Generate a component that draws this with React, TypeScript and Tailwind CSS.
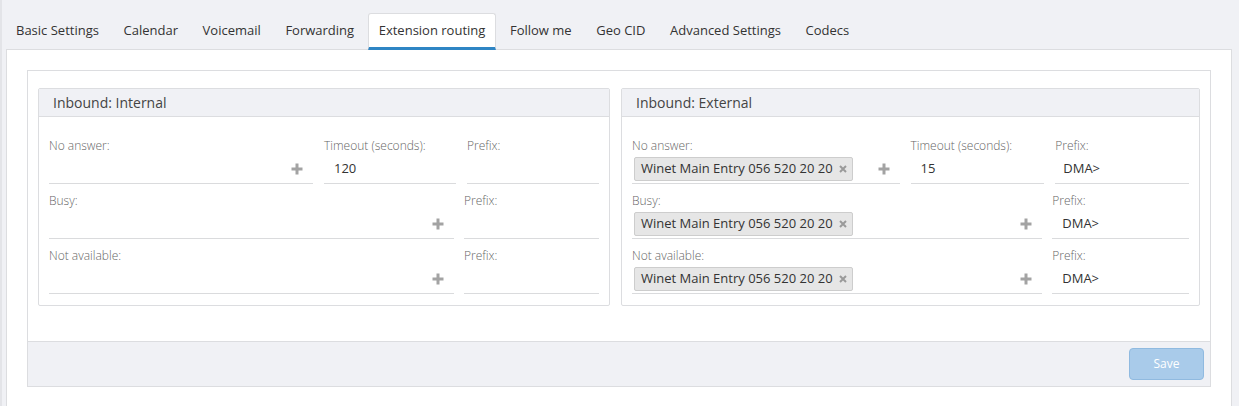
import React from 'react';

const tabs = [
  'Basic Settings',
  'Calendar',
  'Voicemail',
  'Forwarding',
  'Extension routing',
  'Follow me',
  'Geo CID',
  'Advanced Settings',
  'Codecs',
];

const DEST = 'Winet Main Entry 056 520 20 20';

function Plus() {
  return (
    <svg width="12" height="12" viewBox="0 0 12 12" className="shrink-0">
      <path d="M6 0.5v11M0.5 6h11" stroke="#a3a3a3" strokeWidth="3" />
    </svg>
  );
}

function Chip({ text }: { text: string }) {
  return (
    <div className="ml-[2px] flex h-[24px] items-center rounded-[2px] border border-[#cdcdcd] bg-[#e6e6e6] pl-[6px] pr-[5px] text-[13px] text-[#333]">
      <span>{text}</span>
      <svg width="8" height="8" viewBox="0 0 8 8" className="ml-[6px]">
        <path d="M1 1l6 6M7 1l-6 6" stroke="#9a9a9a" strokeWidth="2" />
      </svg>
    </div>
  );
}

function Label({ children }: { children: React.ReactNode }) {
  return <div className="h-[18px] text-[12px] font-light leading-[18px] text-[#666]">{children}</div>;
}

function DestField({ label, chip }: { label: string; chip?: string }) {
  return (
    <div>
      <Label>{label}</Label>
      <div className="flex h-[29px] items-center justify-between border-b border-[#dadbdd] pr-[10px]">
        {chip ? <Chip text={chip} /> : <span />}
        <Plus />
      </div>
    </div>
  );
}

function TextField({ label, value, pad = 'pl-[10px]' }: { label: string; value?: string; pad?: string }) {
  return (
    <div>
      <Label>{label}</Label>
      <div className={`flex h-[29px] items-center border-b border-[#dadbdd] text-[13px] text-[#333] ${pad}`}>
        {value}
      </div>
    </div>
  );
}

function RoutingCard({ title, external, className }: { title: string; external?: boolean; className?: string }) {
  const chip = external ? DEST : undefined;
  const prefix = external ? 'DMA>' : undefined;
  return (
    <div className={`rounded-[2px] border border-[#dcdde0] bg-white ${className ?? ''}`}>
      <div className="flex h-[28px] items-center border-b border-[#dcdde0] bg-[#f0f1f5] px-[14px] text-[14px] text-[#444]">
        {title}
      </div>
      <div className="px-[10px] pb-[11px] pt-[20px]">
        <div className="grid grid-cols-[2fr_1fr_1fr] gap-x-[11px]">
          <DestField label="No answer:" chip={chip} />
          <TextField label="Timeout (seconds):" value={external ? '15' : '120'} />
          <TextField label="Prefix:" value={prefix} pad="pl-[8px]" />
        </div>
        <div className="mt-[8px] grid grid-cols-[3fr_1fr] gap-x-[10px]">
          <DestField label="Busy:" chip={chip} />
          <TextField label="Prefix:" value={prefix} />
        </div>
        <div className="mt-[8px] grid grid-cols-[3fr_1fr] gap-x-[10px]">
          <DestField label="Not available:" chip={chip} />
          <TextField label="Prefix:" value={prefix} />
        </div>
      </div>
    </div>
  );
}

export default function App() {
  return (
    <div
      className="h-[406px] w-full overflow-hidden border-l-2 border-[#e3e4e8] bg-[#f0f1f5]"
      style={{ fontFamily: '"Open Sans", "Liberation Sans", sans-serif' }}
    >
      {/* Tabs */}
      <div className="flex h-[49px] items-end pl-[3px]">
        {tabs.map((tab) => {
          const active = tab === 'Extension routing';
          return (
            <div
              key={tab}
              className={`mr-[2.6px] flex h-[37px] items-center px-[10px] text-[13px] text-[#333] ${
                active
                  ? 'relative top-px rounded-t-[3px] border border-b-[3px] border-[#dcdde0] border-b-[#2f85c4] bg-white'
                  : 'border border-transparent'
              }`}
            >
              {tab}
            </div>
          );
        })}
      </div>

      {/* Tab content */}
      <div className="ml-[4px] mr-[7px] h-[357px] border border-b-0 border-[#dcdde0] bg-white px-[20px] pt-[20px]">
        <div className="border border-[#dcdde0]">
          <div className="flex gap-[11px] px-[10px] pb-[35px] pt-[17px]">
            <RoutingCard title="Inbound: Internal" className="w-[572px]" />
            <RoutingCard title="Inbound: External" external className="flex-1" />
          </div>
          <div className="flex h-[45px] items-start justify-end border-t border-[#dcdde0] bg-[#f0f1f5] pr-[6px] pt-[6px]">
            <button className="h-[32px] w-[75px] rounded-[4px] border border-[#90bae0] bg-[#a9cbea] text-[12px] text-white">
              Save
            </button>
          </div>
        </div>
      </div>
    </div>
  );
}
